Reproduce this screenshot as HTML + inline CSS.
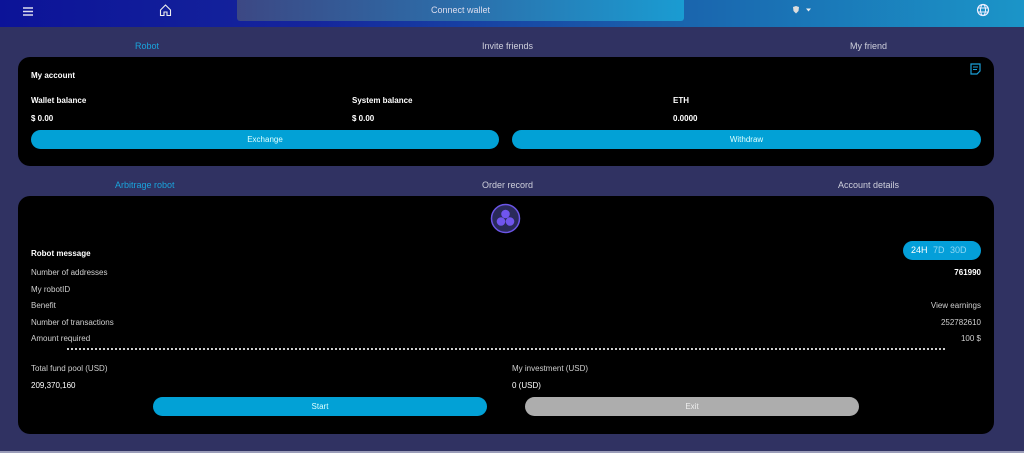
<!DOCTYPE html>
<html><head><meta charset="utf-8"><style>
*{margin:0;padding:0;box-sizing:border-box}
body{width:1024px;height:453px;background:#303262;font-family:"Liberation Sans",sans-serif;color:#fff;position:relative;overflow:hidden}
.hdr{position:absolute;left:0;top:0;width:1024px;height:27px;background:linear-gradient(90deg,#0c1398 0%,#15259c 30%,#1a62ac 65%,#1b95c8 100%)}
.cw{position:absolute;left:237px;top:0;width:447px;height:21px;background:linear-gradient(90deg,#3c4884 0%,#2c6eaa 50%,#1a9cd2 100%);border-radius:0 0 3px 3px;font-size:9px;text-align:center;line-height:20px;color:#dde}
.abs{position:absolute}
.tab{position:absolute;font-size:9px;color:#cfd0dc}
.card{position:absolute;left:18px;width:976px;background:#000;border-radius:12px}
.t{position:absolute;font-size:8px;font-weight:bold;color:#fff}
.s{position:absolute;font-size:8px;color:#cfcfcf}
.btn{position:absolute;height:19px;border-radius:10px;background:#02a1d6;font-size:8px;text-align:center;line-height:19px;color:#dff}
</style></head><body>
<div class="hdr"></div>
<div class="cw">Connect wallet</div>
<svg class="abs" style="left:22px;top:6px" width="12" height="11"><path d="M1 2H11M1 5.5H11M1 9H11" stroke="#dde" stroke-width="1.4"/></svg>
<svg class="abs" style="left:159px;top:3px" width="13" height="14"><path d="M1.5 7L6.5 2L11.5 7V12.5H8V9H5V12.5H1.5Z" fill="none" stroke="#eee" stroke-width="1.1"/></svg>
<svg class="abs" style="left:792px;top:5px" width="20" height="10"><path d="M1 2L4 1L7 2L6.5 6L4 8.5L1.5 6Z" fill="#ddd"/><path d="M14 3.5H19L16.5 6.5Z" fill="#eee"/></svg>
<svg class="abs" style="left:976px;top:3px" width="14" height="14"><circle cx="7" cy="7" r="5.5" fill="none" stroke="#eef" stroke-width="1.2"/><ellipse cx="7" cy="7" rx="2.5" ry="5.5" fill="none" stroke="#eef" stroke-width="1"/><path d="M1.5 5H12.5M1.5 9H12.5" stroke="#eef" stroke-width="1"/></svg>
<div class="tab" style="left:135px;top:41px;color:#1aa4dc">Robot</div>
<div class="tab" style="left:482px;top:41px">Invite friends</div>
<div class="tab" style="left:850px;top:41px">My friend</div>
<div class="card" style="top:57px;height:109px"></div>
<svg class="abs" style="left:970px;top:63px" width="11" height="12"><path d="M1 1H10V8L7 11H1Z" fill="none" stroke="#1a9fd8" stroke-width="1.2"/><path d="M3 4H8M3 6.5H7" stroke="#1a9fd8" stroke-width="1"/></svg>
<div class="t" style="left:31px;top:71px">My account</div>
<div class="t" style="left:31px;top:96px">Wallet balance</div>
<div class="t" style="left:352px;top:96px">System balance</div>
<div class="t" style="left:673px;top:96px">ETH</div>
<div class="t" style="left:31px;top:114px">$ 0.00</div>
<div class="t" style="left:352px;top:114px">$ 0.00</div>
<div class="t" style="left:673px;top:114px">0.0000</div>
<div class="btn" style="left:31px;top:130px;width:468px">Exchange</div>
<div class="btn" style="left:512px;top:130px;width:469px">Withdraw</div>
<div class="tab" style="left:115px;top:180px;color:#1aa4dc">Arbitrage robot</div>
<div class="tab" style="left:482px;top:180px">Order record</div>
<div class="tab" style="left:838px;top:180px">Account details</div>
<div class="card" style="top:196px;height:238px"></div>
<svg class="abs" style="left:490px;top:203px" width="31" height="31"><circle cx="15.5" cy="15.5" r="14" fill="#2a2a5a" stroke="#6b55e6" stroke-width="1.5"/><circle cx="15.5" cy="11" r="4.3" fill="#7055ee"/><circle cx="11" cy="18.5" r="4.3" fill="#7055ee"/><circle cx="20" cy="18.5" r="4.3" fill="#7055ee"/></svg>
<div class="abs" style="left:903px;top:241px;width:78px;height:19px;border-radius:10px;background:#049fd9;font-size:9px;line-height:19px;padding-left:8px;color:#fff">24H <span style="color:#8fd8f4;margin-left:3px">7D</span> <span style="color:#8fd8f4;margin-left:3px">30D</span></div>
<div class="t" style="left:31px;top:249px">Robot message</div>
<div class="s" style="left:31px;top:268px">Number of addresses</div>
<div class="t" style="right:43px;top:268px">761990</div>
<div class="s" style="left:31px;top:285px">My robotID</div>
<div class="s" style="left:31px;top:301px">Benefit</div>
<div class="s" style="right:43px;top:301px">View earnings</div>
<div class="s" style="left:31px;top:318px">Number of transactions</div>
<div class="s" style="right:43px;top:318px">252782610</div>
<div class="s" style="left:31px;top:334px">Amount required</div>
<div class="s" style="right:43px;top:334px">100 $</div>
<div class="abs" style="left:67px;top:348px;width:878px;border-top:2px dotted #ccc"></div>
<div class="s" style="left:31px;top:364px">Total fund pool (USD)</div>
<div class="s" style="left:512px;top:364px">My investment (USD)</div>
<div class="s" style="left:31px;top:381px;color:#fff">209,370,160</div>
<div class="s" style="left:512px;top:381px;color:#fff">0 (USD)</div>
<div class="btn" style="left:153px;top:397px;width:334px">Start</div>
<div class="btn" style="left:525px;top:397px;width:334px;background:#adadad;color:#eee">Exit</div>
<div class="abs" style="left:0;top:451px;width:1024px;height:2px;background:#9a9cb8"></div>
</body></html>
